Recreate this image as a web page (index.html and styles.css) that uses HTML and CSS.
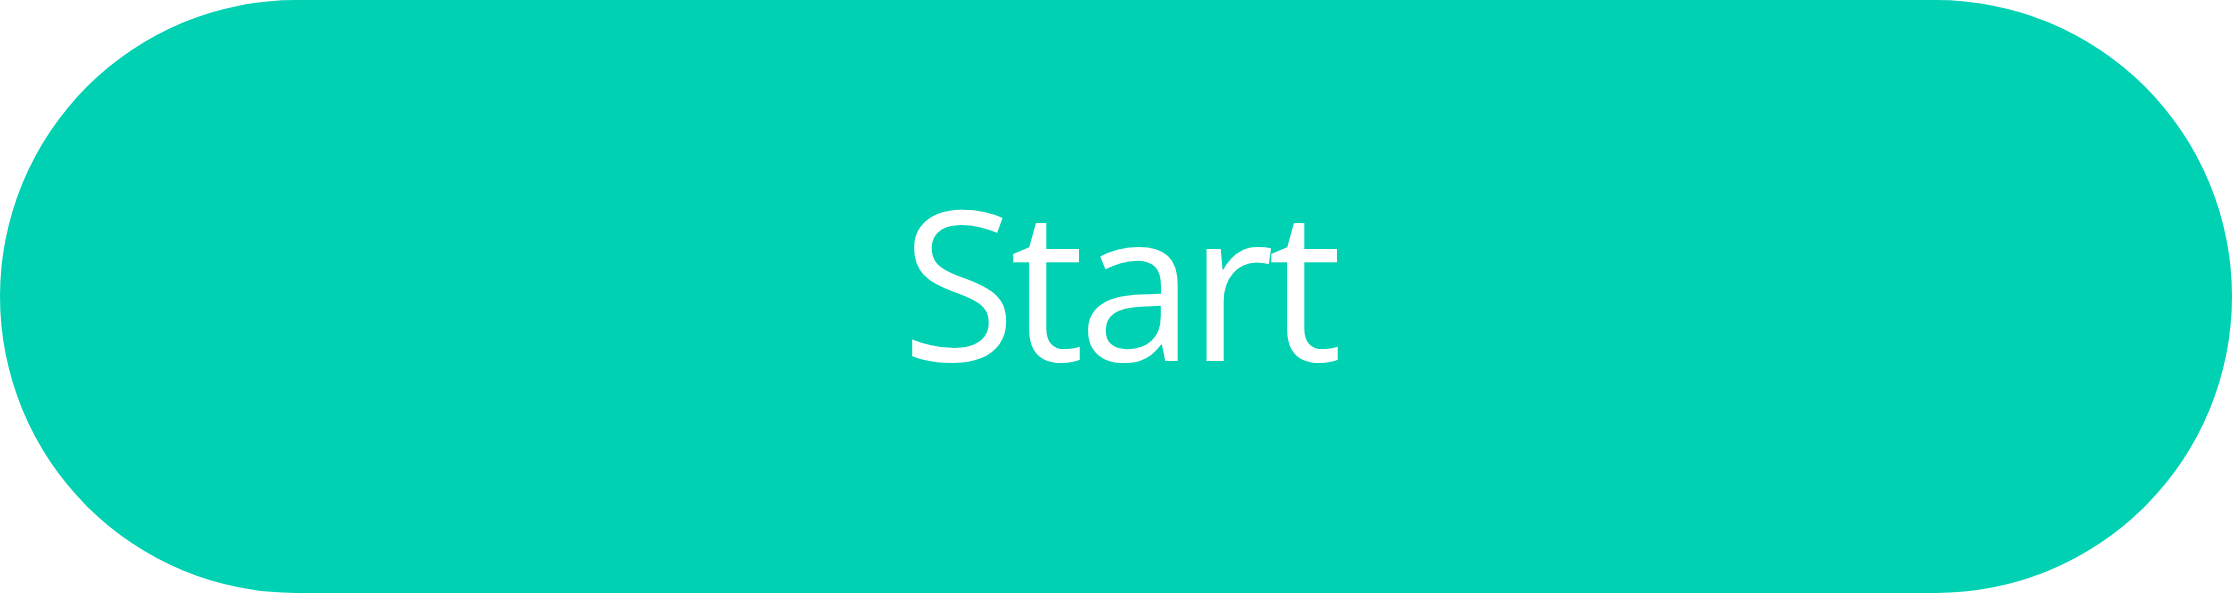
FILE: index.html
```html
<!DOCTYPE html>
<html lang="en">
<head>
<meta charset="utf-8">
<title>Start</title>
<link rel="stylesheet" href="styles.css">
</head>
<body>
<button class="start-btn" type="button"><span class="start-label">Start</span></button>
</body>
</html>
```

FILE: styles.css
```css
html, body {
  margin: 0;
  padding: 0;
  background: #ffffff;
}

body {
  width: 2232px;
  height: 593px;
  overflow: hidden;
}

.start-btn {
  display: flex;
  align-items: center;
  justify-content: center;
  width: 2232px;
  height: 593px;
  margin: 0;
  padding: 0 0 32px 0;
  box-sizing: border-box;
  border: none;
  border-radius: 9999px;
  background: #00d1b2;
  color: #ffffff;
  font-family: "Open Sans", "Noto Sans", sans-serif;
  font-size: 209px;
  font-weight: 400;
  line-height: 1;
  cursor: pointer;
}

.start-label {
  letter-spacing: -6px;
  margin-right: -6px;
}
```
